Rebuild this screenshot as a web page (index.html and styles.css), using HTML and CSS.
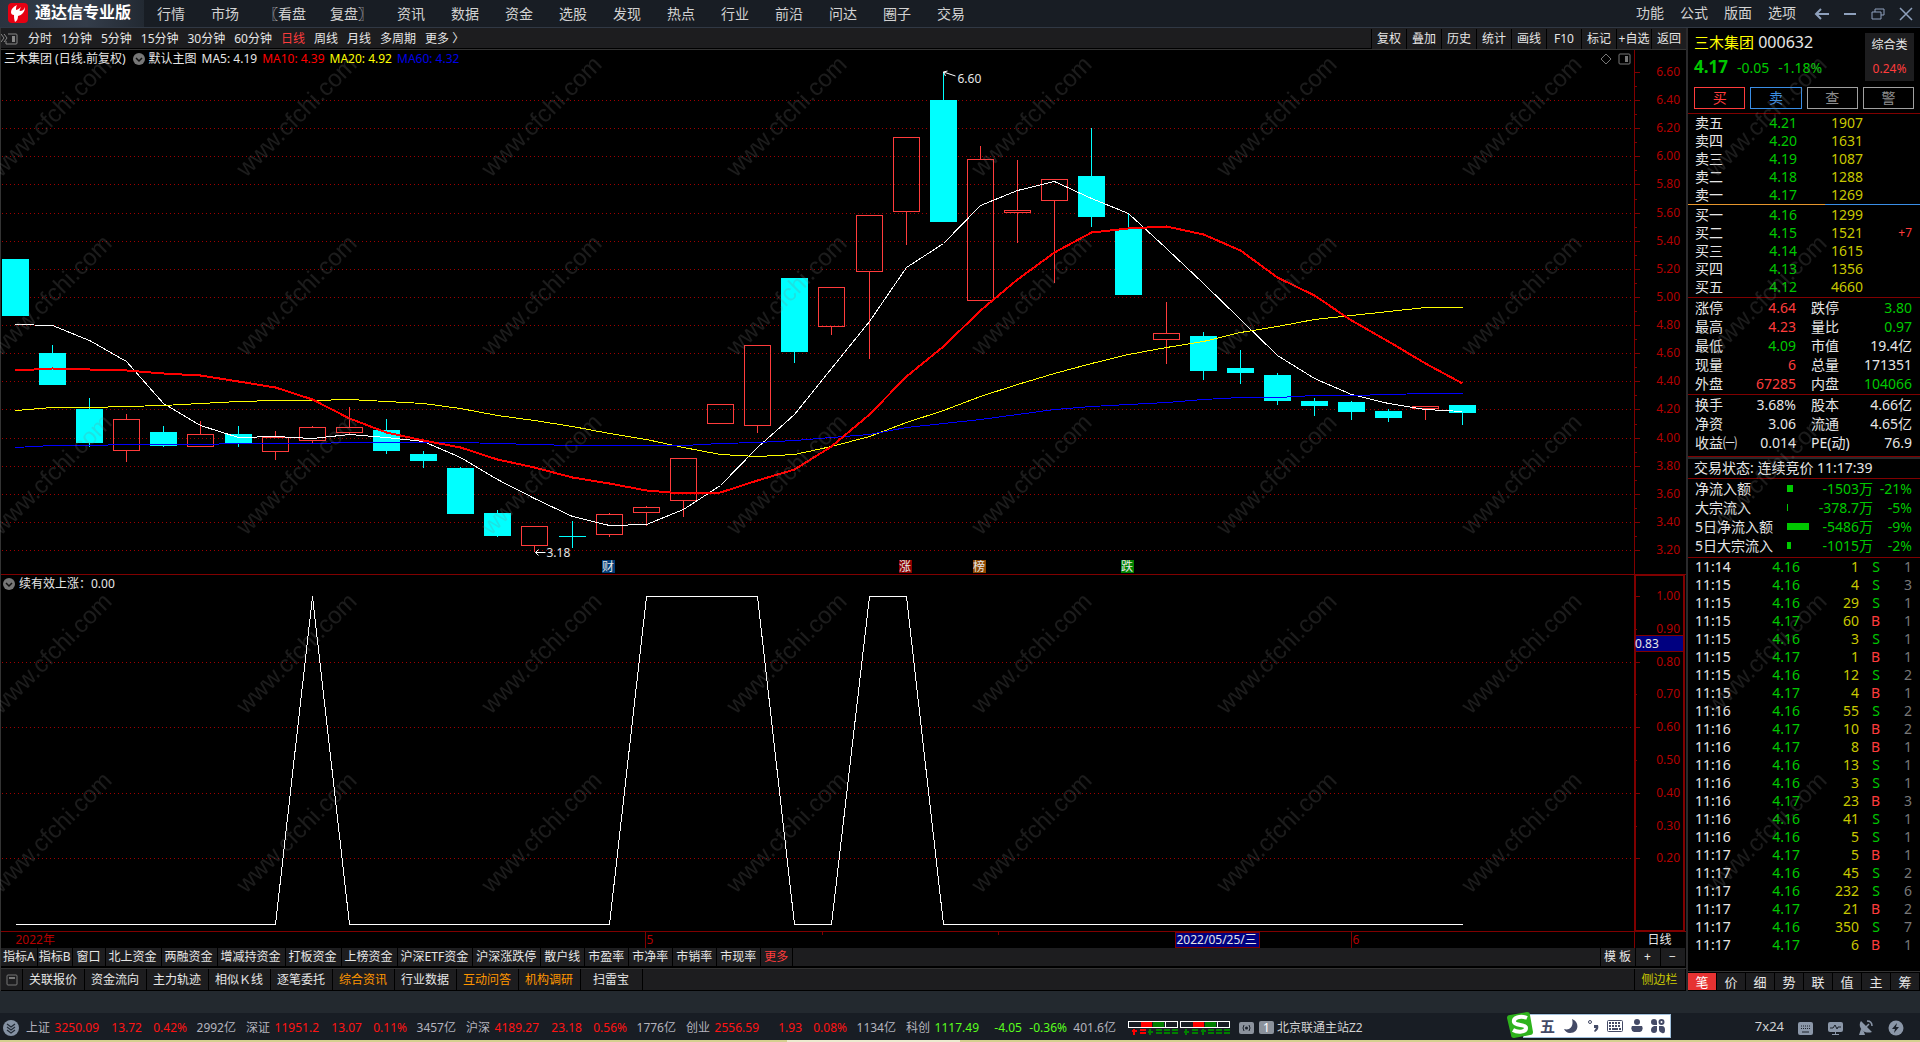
FILE: index.html
```html
<!DOCTYPE html>
<html lang="zh-CN">
<head>
    <meta charset="UTF-8">
    <meta name="viewport" content="width=device-width, initial-scale=1.0">
    <title>通达信专业版 - 三木集团 000632</title>
    <link rel="stylesheet" href="styles.css">
</head>
<body>
    <header class="topbar">
        <div class="brand">
            <svg width="20" height="20" viewBox="0 0 20 20">
                <rect width="20" height="20" rx="4" fill="#e60012"/>
                <path d="M9 2C5 4 3 6 3 9c0 2 1 3 3 3 0 2 0 4 1 7 2-1 3-3 3-6 4-1 7-4 7-9-1 3-3 4-5 4-1 0 0-2 1-4-2 2-4 3-5 3 0-2 0-3 1-5z" fill="#fff"/>
            </svg>
            <span>通达信专业版</span>
        </div>
        <nav class="menu">
            <a href="#">行情</a><a href="#">市场</a><a href="#" class="wide">〖看盘</a><a href="#" class="wide">复盘〗</a><a href="#">资讯</a><a href="#">数据</a><a href="#">资金</a><a href="#">选股</a><a href="#">发现</a><a href="#">热点</a><a href="#">行业</a><a href="#">前沿</a><a href="#">问达</a><a href="#">圈子</a><a href="#">交易</a>
        </nav>
        <nav class="menu-right">
            <a href="#">功能</a><a href="#">公式</a><a href="#">版面</a><a href="#">选项</a>
        </nav>
        <div class="win-btns">
            <button aria-label="后退"><svg width="16" height="16" viewBox="0 0 16 16"><path d="M15 8H2M7 3L2 8l5 5" stroke-width="2"/></svg></button>
            <button aria-label="最小化"><svg width="16" height="16" viewBox="0 0 16 16"><path d="M2 8h12" stroke-width="2"/></svg></button>
            <button aria-label="还原"><svg width="16" height="16" viewBox="0 0 16 16"><path d="M5 6V3h9v6h-3M2 6h9v7H2z"/></svg></button>
            <button aria-label="关闭"><svg width="16" height="16" viewBox="0 0 16 16"><path d="M2 2l12 12M14 2L2 14" stroke-width="1.5"/></svg></button>
        </div>
    </header>

    <div class="main">
        <section class="left">
            <div class="period-bar">
                <svg class="panel-icon" width="18" height="14" viewBox="0 0 18 14">
                    <path d="M0 2l3 4-3 4M3 2l3 4-3 4" fill="none" stroke="#888"/>
                    <path d="M7 2h8q1 0 1 1v8q0 1-1 1H5V9" fill="none" stroke="#888"/>
                    <path d="M11 4h3v6h-3z" fill="#888"/>
                </svg>
                <div class="periods">
                    <a href="#">分时</a><a href="#">1分钟</a><a href="#">5分钟</a><a href="#">15分钟</a><a href="#">30分钟</a><a href="#">60分钟</a><a href="#" class="on">日线</a><a href="#">周线</a><a href="#">月线</a><a href="#">多周期</a><a href="#">更多 〉</a>
                </div>
                <div class="tools">
                    <button>复权</button><button>叠加</button><button>历史</button><button>统计</button><button>画线</button><button>F10</button><button>标记</button><button>+自选</button><button>返回</button>
                </div>
            </div>

            <div class="pane pane-k">
                <svg id="kchart" class="plot"></svg>
                <div class="pane-head">
                    <span>三木集团 (日线.前复权)</span>
                    <svg class="drop" width="12" height="12" viewBox="0 0 12 12"><circle cx="6" cy="6" r="6" fill="#777"/><path d="M3 5l3 3 3-3" fill="none" stroke="#111" stroke-width="1.5"/></svg>
                    <span>默认主图</span>
                    <span>MA5: 4.19</span>
                    <span class="ma10">MA10: 4.39</span>
                    <span class="ma20">MA20: 4.92</span>
                    <span class="ma60">MA60: 4.32</span>
                    <svg class="corner" width="32" height="12" viewBox="0 0 32 12"><path d="M6 1l5 5-5 5-5-5z" fill="none" stroke="#777"/><rect x="19" y="1" width="11" height="10" rx="1" fill="none" stroke="#777"/><path d="M25 3h3v6h-3z" fill="#777"/></svg>
                </div>
            </div>
            <div class="pane pane-sub">
                <svg id="subchart" class="plot"></svg>
                <div class="pane-head sub">
                    <svg class="drop" width="12" height="12" viewBox="0 0 12 12"><circle cx="6" cy="6" r="6" fill="#777"/><path d="M3 5l3 3 3-3" fill="none" stroke="#111" stroke-width="1.5"/></svg>
                    <span>续有效上涨：0.00</span>
                </div>
            </div>
            <div class="dates">
                <svg id="dateaxis" class="plot"></svg>
                <span class="cycle">日线</span>
            </div>

            <div class="tabs">
                <button class="slim">指标A</button><button class="slim">指标B</button><button>窗口</button><button>北上资金</button><button>两融资金</button><button>增减持资金</button><button>打板资金</button><button>上榜资金</button><button>沪深ETF资金</button><button>沪深涨跌停</button><button>散户线</button><button>市盈率</button><button>市净率</button><button>市销率</button><button>市现率</button><button class="on">更多</button>
                <span class="fill"></span>
                <button class="tpl">模 板</button><button class="zoom">+</button><button class="zoom">−</button>
            </div>
            <div class="tabs links">
                <button class="box" aria-label="窗口"><svg width="12" height="12" viewBox="0 0 12 12"><rect x="1" y="1" width="10" height="10" rx="1" fill="none" stroke="#777"/><path d="M3 3h6v2H3z" fill="#777"/></svg></button><button>关联报价</button><button>资金流向</button><button>主力轨迹</button><button>相似Ｋ线</button><button>逐笔委托</button><button class="hot">综合资讯</button><button>行业数据</button><button class="hot">互动问答</button><button class="hot">机构调研</button><button>扫雷宝</button>
                <span class="fill"></span>
                <button class="sidebar-btn">侧边栏</button>
            </div>
        </section>

        <aside class="side">
            <div class="quote">
                <div class="quote-info">
                    <div class="name"><b>三木集团</b> 000632</div>
                    <div class="price"><b>4.17</b><span>-0.05</span><span>-1.18%</span></div>
                </div>
                <div class="sector"><span>综合类</span><span class="r">0.24%</span></div>
                <div class="actions">
                    <button class="buy">买</button><button class="sell">卖</button><button>查</button><button>警</button>
                </div>
            </div>
            <table class="book">
                <tr><th>卖五</th><td>4.21</td><td>1907</td><td></td></tr>
                <tr><th>卖四</th><td>4.20</td><td>1631</td><td></td></tr>
                <tr><th>卖三</th><td>4.19</td><td>1087</td><td></td></tr>
                <tr><th>卖二</th><td>4.18</td><td>1288</td><td></td></tr>
                <tr><th>卖一</th><td>4.17</td><td>1269</td><td></td></tr>
            </table>
            <div class="ratio"></div>
            <table class="book">
                <tr><th>买一</th><td>4.16</td><td>1299</td><td></td></tr>
                <tr><th>买二</th><td>4.15</td><td>1521</td><td>+7</td></tr>
                <tr><th>买三</th><td>4.14</td><td>1615</td><td></td></tr>
                <tr><th>买四</th><td>4.13</td><td>1356</td><td></td></tr>
                <tr><th>买五</th><td>4.12</td><td>4660</td><td></td></tr>
            </table>
            <table class="stats">
                <tr><th>涨停</th><td class="r">4.64</td><th>跌停</th><td class="g">3.80</td></tr>
                <tr><th>最高</th><td class="r">4.23</td><th>量比</th><td class="g">0.97</td></tr>
                <tr><th>最低</th><td class="g">4.09</td><th>市值</th><td>19.4亿</td></tr>
                <tr><th>现量</th><td class="r">6</td><th>总量</th><td>171351</td></tr>
                <tr><th>外盘</th><td class="r">67285</td><th>内盘</th><td class="g">104066</td></tr>
            </table>
            <table class="stats">
                <tr><th>换手</th><td>3.68%</td><th>股本</th><td>4.66亿</td></tr>
                <tr><th>净资</th><td>3.06</td><th>流通</th><td>4.65亿</td></tr>
                <tr><th>收益㈠</th><td>0.014</td><th>PE(动)</th><td>76.9</td></tr>
            </table>
            <div class="state">交易状态: 连续竞价 11:17:39</div>
            <table class="flow">
                <tr><th>净流入额</th><td><i style="width:6px"></i></td><td>-1503万</td><td>-21%</td></tr>
                <tr><th>大宗流入</th><td><i style="width:1px"></i></td><td>-378.7万</td><td>-5%</td></tr>
                <tr><th>5日净流入额</th><td><i style="width:22px"></i></td><td>-5486万</td><td>-9%</td></tr>
                <tr><th>5日大宗流入</th><td><i style="width:4px"></i></td><td>-1015万</td><td>-2%</td></tr>
            </table>
            <div class="ticks">
                <table id="ticks"></table>
            </div>
            <div class="side-tabs">
                <button class="on">笔</button><button>价</button><button>细</button><button>势</button><button>联</button><button>值</button><button>主</button><button>筹</button>
            </div>
        </aside>

        <svg class="watermark">
            <defs>
                <pattern id="wm" x="-12" y="6" width="245" height="179" patternUnits="userSpaceOnUse">
                    <text transform="translate(13 122) rotate(-45)">www.cfchi.com</text>
                </pattern>
            </defs>
            <rect width="100%" height="100%" fill="url(#wm)"/>
        </svg>
    </div>

    <div class="band"></div>
    <footer class="status">
        <svg class="fold" width="16" height="16" viewBox="0 0 16 16"><circle cx="8" cy="8" r="8" fill="#8592a3"/><path d="M4 4l4 3 4-3M4 7l4 3 4-3M4 10l4 3 4-3" fill="none" stroke="#222b36" stroke-width="1.2"/></svg>
        <div class="idx"><span>上证</span><b>3250.09</b><b>13.72</b><b>0.42%</b><span>2992亿</span></div>
        <div class="idx"><span>深证</span><b>11951.2</b><b>13.07</b><b>0.11%</b><span>3457亿</span></div>
        <div class="idx"><span>沪深</span><b>4189.27</b><b>23.18</b><b>0.56%</b><span>1776亿</span></div>
        <div class="idx"><span>创业</span><b>2556.59</b><b>1.93</b><b>0.08%</b><span>1134亿</span></div>
        <div class="idx down"><span>科创</span><b>1117.49</b><b>-4.05</b><b>-0.36%</b><span>401.6亿</span></div>
        <svg class="meter" width="104" height="16" viewBox="0 0 104 16" shape-rendering="crispEdges">
            <path d="M13 1h11v6H13zM65 1h11v6H65z" fill="#f00"/>
            <path d="M25 1h11v6H25zM77 1h11v6H77z" fill="#008000"/>
            <path d="M.5 1.5h49v6H.5zM37.5 1v6M52.5 1.5h49v6h-49zM89.5 1v6" fill="none" stroke="#fff"/>
            <path d="M6 9v6M4 11h5M12 10h6M12 13h6" fill="none" stroke="#f00" stroke-width="2"/>
            <path d="M22 9v6M20 12h5M28 10h6M28 13h6M36 10h6M36 13h6M44 10h6M44 13h6M58 9v6M56 12h5M64 10h6M64 13h6M75 9v6M73 11h5M80 10h6M80 13h6M88 10h6M88 13h6M96 10h6M96 13h6" fill="none" stroke="#008000" stroke-width="2"/>
        </svg>
        <svg width="15" height="12" viewBox="0 0 15 12"><rect width="15" height="12" rx="2" fill="#8b929c"/><circle cx="7.500" cy="6" r="1.500" fill="#1a2029"/><path d="M5 3Q3 6 5 9M10 3q2 3 0 6" fill="none" stroke="#1a2029"/></svg>
        <span class="num">1</span>
        <span class="station">北京联通主站Z2</span>
        <div class="status-right">
            <span>7x24</span>
            <svg width="16" height="16" viewBox="0 0 16 16"><rect y="2" width="15" height="13" rx="2" fill="#8b97a8"/><path d="M3 6h10M3 8.500h10" stroke="#1a2029" stroke-dasharray="1 1"/><path d="M4 12h7" stroke="#1a2029"/></svg>
            <svg width="16" height="16" viewBox="0 0 16 16"><rect y="2" width="15" height="10" rx="2" fill="#8b97a8"/><path d="M7.500 12v2M4 14.500h7" stroke="#8b97a8"/><path d="M2 8h3l2-3 2 4 1-2h3" fill="none" stroke="#1a2029"/></svg>
            <svg width="16" height="16" viewBox="0 0 16 16"><path d="M3 1c-4 5 2 14 11 11zM3 9l3 3 1 3H1z" fill="#8b97a8"/><path d="M8 7l3-3M9 1c3 0 5 2 5 5" fill="none" stroke="#8b97a8" stroke-width="1.500"/></svg>
            <svg width="16" height="16" viewBox="0 0 16 16"><circle cx="8" cy="8" r="7.500" fill="#8b97a8"/><path d="M9 3L4 9h3l-1 4 5-6H8z" fill="#1a2029"/></svg>
        </div>
        <div class="ime">
            <svg class="ime-logo" width="28" height="28" viewBox="0 0 28 28"><path d="M4 4l17-3q3 0 3 3l3 17q0 3-3 3L8 27q-3 0-3-3L1 7q0-3 3-3z" fill="#2eb31c"/><path d="M21 7C14 4 7 7 8 11s12 2 12 6-8 5-13 2" fill="none" stroke="#fff" stroke-width="4"/></svg>
            <span>五</span>
            <svg width="16" height="16" viewBox="0 0 16 16"><path d="M9 1c8 3 7 14-2 14-3 0-5-2-6-4 6 2 10-3 8-10z" fill="#444a66"/></svg>
            <svg width="12" height="16" viewBox="0 0 12 16"><circle cx="3" cy="4" r="1.500" fill="none" stroke="#444a66"/><path d="M7 7h4c1 3 0 5-3 7l-1-1 2-3H7z" fill="#444a66"/></svg>
            <svg width="16" height="16" viewBox="0 0 16 16"><rect x=".5" y="2.500" width="15" height="11" rx="1" fill="none" stroke="#444a66"/><path d="M2 5h12M2 8h12" stroke="#444a66" stroke-width="2" stroke-dasharray="2 1"/><path d="M2 11h2M5 11h6M12 11h2" stroke="#444a66" stroke-width="2"/></svg>
            <svg width="12" height="16" viewBox="0 0 12 16"><circle cx="6" cy="4" r="3" fill="#444a66"/><path d="M1 8h10q2 4-2 6H3q-4-2-2-6z" fill="#444a66"/></svg>
            <svg width="14" height="16" viewBox="0 0 14 16"><path d="M3 1q3 0 3 3v3H3Q0 7 0 4t3-3zM6 8v4q0 3-3 3t-3-3 3-4zM8 8h3q3 0 3 4t-3 3-3-3z" fill="#444a66"/><circle cx="10.500" cy="4" r="2" fill="none" stroke="#444a66" stroke-width="2"/></svg>
        </div>
    </footer>
    <div class="strip"></div>

    <script src="script.js"></script>
</body>
</html>
```
FILE: styles.css
```css
* {
    box-sizing: border-box;
}
body {
    margin: 0;
    min-height: 100vh;
    display: flex;
    flex-direction: column;
    background-color: #000;
    color: #e6e6e6;
    font-family: "Noto Sans", "Noto Sans CJK SC", sans-serif;
    font-size: 12px;
    line-height: 18px;
    white-space: nowrap;
}
a {
    color: inherit;
    text-decoration: none;
}
button {
    font: inherit;
    color: inherit;
    background-color: #1d1d1f;
    border: none;
    padding: 0;
    cursor: pointer;
}
svg {
    display: block;
    flex: none;
}
table {
    width: 100%;
    table-layout: fixed;
    border-collapse: collapse;
}
th, td {
    padding: 0;
    font-weight: normal;
    text-align: left;
}
.r {
    color: #ff3c3c;
}
.g {
    color: #00c800;
}

/* title bar */
.topbar {
    display: flex;
    height: 28px;
    background-color: #181d24;
    border-bottom: 1px solid #303844;
    font-size: 14px;
    line-height: 27px;
    color: #d2d2d2;
}
.brand {
    display: flex;
    align-items: center;
    gap: 7px;
    width: 144px;
    padding-left: 8px;
    padding-bottom: 2px;
    background: linear-gradient(90deg, #2b333f, #343d4a 60%, #222932);
    font-size: 16px;
    font-weight: bold;
    color: #fff;
}
.menu {
    display: flex;
    flex: 1;
}
.menu a {
    padding: 0 13px;
}
.menu a.wide {
    padding: 0 12px;
}
.menu-right {
    display: flex;
    gap: 16px;
    line-height: 26px;
}
.win-btns {
    display: flex;
    align-items: center;
    gap: 12px;
    padding: 0 6px 0 18px;
}
.win-btns button {
    background: none;
}
.win-btns svg {
    fill: none;
    stroke: #8ea0bc;
}

.main {
    position: relative;
    flex: 1;
    display: grid;
    grid-template-columns: 1fr 234px;
}
.watermark {
    position: absolute;
    left: 0;
    top: 22px;
    width: 100%;
    height: calc(100% - 66px);
    pointer-events: none;
}
.watermark text {
    font-family: "Liberation Sans", sans-serif;
    font-size: 24px;
    fill: rgba(128, 128, 128, 0.22);
}

/* chart side */
.left {
    display: flex;
    flex-direction: column;
    min-width: 0;
    border-left: 1px solid #333;
}
.period-bar {
    display: flex;
    align-items: center;
    height: 22px;
    background-color: #1d1d1f;
    border-bottom: 1px solid #333;
    box-shadow: inset 0 -1px #000;
}
.panel-icon {
    width: 27px;
    padding-right: 9px;
}
.periods {
    display: flex;
    flex: 1;
    gap: 9px;
}
.periods .on, .tabs .on {
    color: #ff3c3c;
}
.tools {
    display: flex;
}
.tools button {
    width: 35px;
    height: 20px;
    border-left: 1px solid #000;
}
.pane {
    position: relative;
    border-bottom: 1px solid #800000;
}
.pane-k {
    flex: 525 1 0;
}
.pane-sub {
    flex: 357 1 0;
}
.plot {
    position: absolute;
    left: 0;
    top: 0;
    width: 100%;
    height: 100%;
}
.plot text {
    font-size: 12px;
    fill: #b40000;
}
.plot .white {
    fill: #e6e6e6;
}
.plot .end {
    text-anchor: end;
}
.pane-head {
    position: relative;
    display: flex;
    align-items: center;
    gap: 5px;
    padding-left: 3px;
    width: calc(100% - 52px);
}
.pane-head .drop {
    margin-left: 2px;
    margin-right: -1px;
}
.pane-head.sub .drop {
    margin-left: -1px;
}
.corner {
    margin-left: auto;
    margin-right: 2px;
}
.ma10 {
    color: #f00;
}
.ma20 {
    color: #ff0;
}
.ma60 {
    color: #0000e6;
}
.dates {
    position: relative;
    display: flex;
    justify-content: flex-end;
    height: 16px;
    line-height: 16px;
}
.cycle {
    width: 52px;
    padding-right: 2px;
    text-align: center;
    border-left: 1px solid #800000;
}

.tabs {
    display: flex;
    height: 21px;
    padding-left: 1px;
    border-bottom: 1px solid #333;
    background: #1d1d1f;
    box-shadow: inset 0 -2px #000;
    padding-bottom: 2px;
}
.tabs button {
    padding: 0 4px 0 3px;
    border-right: 1px solid #000;
}
.tabs .slim {
    padding: 0 2px 0 1px;
}
.fill {
    flex: 1;
}
.tabs .tpl {
    width: 36px;
    border-left: 1px solid #000;
}
.tabs .zoom {
    width: 25px;
}
.tabs.links {
    height: 22px;
    border-bottom-color: #000;
    padding-bottom: 0;
    box-shadow: none;
}
.links button {
    width: 62px;
}
.tabs .box {
    width: 21px;
    padding: 0 4px;
}
.tabs .hot {
    color: #ff9600;
}
.tabs .sidebar-btn {
    width: 52px;
    color: #c8c800;
    border-left: 1px solid #000;
}

/* quote side */
.side {
    display: flex;
    flex-direction: column;
    border-left: 2px solid #2a2a2c;
    font-size: 14px;
}
.quote {
    display: grid;
    grid-template-columns: 1fr 49px;
    padding: 5px 6px 5px 6px;
    height: 85px;
}
.name {
    font-size: 16px;
    line-height: 18px;
}
.name b {
    font-size: 15px;
    font-weight: normal;
    color: #ff0;
}
.price {
    display: flex;
    align-items: baseline;
    gap: 9px;
    line-height: 31px;
    color: #00c800;
}
.price b {
    font-size: 17px;
}
.sector {
    display: flex;
    flex-direction: column;
    height: 48px;
    background-color: #1d1d1f;
    font-size: 12px;
    line-height: 24px;
    text-align: center;
}
.actions {
    grid-column: 1 / 3;
    display: flex;
    gap: 5px;
    padding-top: 4px;
}
.actions button {
    flex: 1;
    height: 22px;
    line-height: 18px;
    background: none;
    border: 1px solid #a0a0a0;
    color: #8c8c8c;
}
.actions .buy {
    color: #ff3c3c;
    border-color: #ff3c3c;
}
.actions .sell {
    color: #3a8ee6;
    border-color: #3a8ee6;
}
.side > table, .side .ticks {
    border-top: 1px solid #800000;
}
.side th, .side table td {
    height: 18px;
    line-height: 18px;
}
.side th {
    padding-left: 7px;
}
.side td {
    text-align: right;
}
.book th {
    width: 50px;
}
.book td:nth-child(2) {
    width: 59px;
    color: #00c800;
}
.book td:nth-child(3) {
    width: 66px;
    color: #c8c800;
}
.book td:nth-child(4) {
    padding-right: 8px;
    font-size: 12px;
    color: #ff3c3c;
}
.ratio {
    height: 1px;
    background: linear-gradient(90deg, #e6962d 59%, #3a8ee6 59%);
}
.side .ratio + .book {
    border-top: 1px solid #000;
    border-bottom: 1px solid #000;
}
.side .stats th, .side .stats td, .side .flow th, .side .flow td {
    height: 19px;
    line-height: 19px;
}
.stats th {
    width: 56px;
}
.stats td {
    width: 52px;
}
.stats td + th {
    padding-left: 15px;
}
.stats td:last-child {
    width: 68px;
    padding-right: 8px;
}
.stats + .stats {
    margin-top: 1px;
    border-bottom: 4px solid #000;
}
.state {
    height: 22px;
    padding-left: 6px;
    line-height: 21px;
    border-top: 1px solid #800000;
    box-shadow: inset 0 2px #2a2a2c;
}
.flow th {
    width: 99px;
}
.flow td:nth-child(2) {
    width: 24px;
}
.flow td:nth-child(3) {
    width: 62px;
}
.flow td {
    color: #00c800;
}
.flow td:last-child {
    padding-right: 8px;
}
.flow i {
    display: block;
    height: 7px;
    background-color: #00c800;
}
.flow {
    margin-bottom: 2px;
}
.ticks {
    flex: 1;
}
.ticks td:nth-child(1) {
    width: 55px;
    padding-left: 7px;
    text-align: left;
}
.ticks td:nth-child(2) {
    width: 57px;
    color: #00c800;
}
.ticks td:nth-child(3) {
    width: 59px;
    color: #c8c800;
}
.ticks td:nth-child(4) {
    width: 21px;
}
.ticks td:nth-child(5) {
    padding-right: 8px;
    color: #787878;
}
.side-tabs {
    display: flex;
    height: 20px;
    gap: 1px;
    border-top: 1px solid #333;
    padding: 1px 1px 1px 0;
}
.side-tabs button {
    flex: 1;
    line-height: 16px;
    font-size: 13px;
}
.side-tabs .on {
    background-color: #e63232;
    color: #fff;
}

/* status bar */
.band {
    height: 22px;
    background-color: #23292f;
}
.status {
    position: relative;
    display: flex;
    align-items: center;
    height: 27px;
    padding-top: 2px;
    background-color: #181d24;
    color: #b4b4be;
}
.fold {
    margin: 0 7px 0 3px;
}
.idx {
    display: grid;
    grid-template-columns: 25px 48px 43px 45px 49px;
    width: 220px;
    text-align: right;
}
.idx span:first-child {
    text-align: left;
}
.idx b {
    font-weight: normal;
    color: #ff1414;
}
.idx.down b {
    color: #5aff1e;
}
.meter {
    margin: 0 7px 0 2px;
}
.num {
    width: 15px;
    height: 13px;
    margin: 0 3px 0 5px;
    border-radius: 2px;
    background-color: #8b929c;
    color: #fff;
    line-height: 13px;
    text-align: center;
}
.station {
    color: #d2d2d2;
}
.status-right {
    display: flex;
    align-items: center;
    gap: 14px;
    margin-left: auto;
    padding-right: 16px;
}
.status-right span {
    font-size: 13px;
    color: #d2d2d2;
    padding-bottom: 4px;
}
.ime {
    position: absolute;
    right: 249px;
    top: 1px;
    display: flex;
    align-items: center;
    gap: 8px;
    height: 24px;
    padding-right: 5px;
    background-color: #fff;
    border: 1px solid #a0c0dc;
    color: #444a66;
    font-size: 15px;
    font-weight: bold;
}
.ime-logo {
    margin: -3px -2px 0 -18px;
}
.strip {
    height: 2px;
    background: linear-gradient(90deg, #d4d08f 41%, #ecebd0 41%, #ecebd0 50%, #d4d08f 50%);
}
```
FILE: script.js
```javascript
const SVG_NS = 'http://www.w3.org/2000/svg';
const AXIS_W = 52;
const BASE_W = 1633, K_H = 524, SUB_H = 356;

// [direction, high, top of body, bottom of body, low], in chart units from the top of the pane
const candles = [
    ['d', 209, 209, 266, 266], ['d', 295, 303, 335, 335], ['d', 348, 359, 393, 397], ['u', 364, 369, 401, 412],
    ['d', 376, 382, 396, 397], ['u', 371, 384, 397, 397], ['d', 376, 384, 393, 397], ['u', 381, 387, 402, 410],
    ['u', 376, 377, 391, 393], ['u', 357, 377, 383, 385], ['d', 369, 380, 401, 404], ['d', 401, 404, 411, 418],
    ['d', 417, 418, 464, 464], ['d', 460, 463, 486, 487], ['u', 476, 476, 496, 502], ['d', 471, 486, 487, 498],
    ['u', 463, 464, 485, 487], ['u', 456, 457, 463, 476], ['u', 408, 408, 451, 467], ['u', 354, 354, 374, 374],
    ['u', 295, 295, 376, 383], ['d', 228, 228, 302, 313], ['u', 237, 237, 277, 285], ['u', 165, 165, 222, 309],
    ['u', 87, 87, 162, 195], ['d', 22, 50, 172, 172], ['u', 96, 109, 251, 251], ['u', 110, 160, 163, 193],
    ['u', 129, 129, 151, 233], ['d', 78, 126, 167, 177], ['d', 163, 179, 245, 245], ['u', 252, 283, 290, 314],
    ['d', 282, 286, 321, 330], ['d', 300, 318, 323, 334], ['d', 323, 325, 351, 355], ['d', 348, 351, 356, 366],
    ['d', 351, 352, 362, 370], ['d', 359, 361, 368, 372], ['u', 356, 356, 359, 370], ['d', 355, 355, 363, 375]
];
const averages = [
    { color: '#ffffff', width: 1, y: [274, 275, 290, 311, 353, 375, 387, 386, 388, 384, 387, 391, 407, 429, 448, 466, 475, 474, 459, 435, 397, 364, 318, 271, 217, 193, 155, 140, 131, 148, 163, 198, 233, 269, 305, 328, 344, 353, 359, 361] },
    { color: '#ffff00', width: 1, y: [360, 357, 357, 356, 355, 353, 351, 350, 350, 349, 351, 353, 358, 365, 370, 376, 383, 389, 397, 404, 406, 404, 396, 386, 372, 360, 346, 334, 323, 313, 304, 297, 291, 282, 276, 269, 265, 261, 257, 257] },
    { color: '#0000ff', width: 1, y: [397, 395, 395, 394, 394, 394, 393, 393, 393, 392, 392, 392, 392, 393, 394, 395, 395, 395, 395, 393, 392, 390, 387, 384, 377, 373, 369, 364, 359, 356, 354, 352, 349, 347, 347, 345, 345, 344, 343, 343] },
    { color: '#ff0000', width: 2, y: [320, 318, 319, 320, 323, 325, 331, 337, 349, 368, 382, 390, 397, 409, 417, 427, 433, 440, 443, 442, 430, 419, 396, 364, 326, 296, 260, 229, 202, 182, 178, 176, 184, 200, 227, 245, 270, 291, 313, 333] }
];
const signal = [0, 0, 0, 0, 0, 0, 0, 0, 1, 0, 0, 0, 0, 0, 0, 0, 0, 1, 1, 1, 1, 0, 0, 1, 1, 0, 0, 0, 0, 0, 0, 0, 0, 0, 0, 0, 0, 0, 0, 0];
const events = [[16, '财', '#003c78'], [24, '涨', '#8c0000'], [26, '榜', '#8c4600'], [30, '跌', '#008200']];

const ticks = [
    ['11:14', '4.16', 1, 'S', 1], ['11:15', '4.16', 4, 'S', 3], ['11:15', '4.16', 29, 'S', 1], ['11:15', '4.17', 60, 'B', 1],
    ['11:15', '4.16', 3, 'S', 1], ['11:15', '4.17', 1, 'B', 1], ['11:15', '4.16', 12, 'S', 2], ['11:15', '4.17', 4, 'B', 1],
    ['11:16', '4.16', 55, 'S', 2], ['11:16', '4.17', 10, 'B', 2], ['11:16', '4.17', 8, 'B', 1], ['11:16', '4.16', 13, 'S', 1],
    ['11:16', '4.16', 3, 'S', 1], ['11:16', '4.17', 23, 'B', 3], ['11:16', '4.16', 41, 'S', 1], ['11:16', '4.16', 5, 'S', 1],
    ['11:17', '4.17', 5, 'B', 1], ['11:17', '4.16', 45, 'S', 2], ['11:17', '4.16', 232, 'S', 6], ['11:17', '4.17', 21, 'B', 2],
    ['11:17', '4.16', 350, 'S', 7], ['11:17', '4.17', 6, 'B', 1]
];

function add(svg, tag, attrs, text) {
    const el = document.createElementNS(SVG_NS, tag);
    for (const k in attrs) el.setAttribute(k, attrs[k]);
    if (text) el.textContent = text;
    svg.appendChild(el);
}

function line(svg, x1, y1, x2, y2, color, extra) {
    add(svg, 'path', { d: `M${x1} ${y1}L${x2} ${y2}`, stroke: color, fill: 'none', 'shape-rendering': 'crispEdges', ...extra });
}

function rect(svg, x, y, width, height, fill, stroke) {
    add(svg, 'rect', { x, y, width, height, fill, stroke: stroke || 'none', 'shape-rendering': 'crispEdges' });
}

function polyline(svg, points, color, width) {
    add(svg, 'polyline', { points: points.map(p => p.join(',')).join(' '), fill: 'none', stroke: color, 'stroke-width': width, 'shape-rendering': 'crispEdges' });
}

function centerX(i, plotW) {
    return Math.floor((14.3 + 37.12 * i) * plotW / BASE_W) + 0.5;
}

function drawK() {
    const svg = document.getElementById('kchart');
    svg.innerHTML = '';
    const plotW = svg.clientWidth - AXIS_W;
    const h = svg.clientHeight;
    const sy = v => Math.round(v * h / K_H);

    line(svg, plotW + 0.5, 0, plotW + 0.5, h, '#800000');
    for (let k = 0; k <= 34; k++) {
        const y = sy(22 + k * 14.06) + 0.5;
        if (k % 2) {
            line(svg, plotW, y, plotW + 3, y, '#800000');
            continue;
        }
        line(svg, plotW, y, plotW + 6, y, '#800000');
        if (k > 0) line(svg, 1, y, plotW, y, '#a00000', { 'stroke-dasharray': '1 3' });
        add(svg, 'text', { x: plotW + 46, y: y + 3.5, class: 'end' }, (6.6 - k * 0.1).toFixed(2));
    }

    const bw = Math.round(27 * plotW / BASE_W);
    candles.forEach(([dir, high, top, bottom, low], i) => {
        const cx = centerX(i, plotW);
        const x = Math.round(cx - bw / 2);
        const color = dir === 'u' ? '#ff3c3c' : '#00ffff';
        line(svg, cx, sy(high), cx, sy(top), color);
        line(svg, cx, sy(bottom), cx, sy(low), color);
        if (dir === 'u') {
            rect(svg, x + 0.5, sy(top) + 0.5, bw - 1, sy(bottom) - sy(top) - 1, 'none', color);
        } else {
            rect(svg, x, sy(top), bw, sy(bottom) - sy(top), color);
        }
    });

    averages.forEach(ma => {
        polyline(svg, ma.y.map((v, i) => [centerX(i, plotW), sy(v) + 0.5]), ma.color, ma.width);
    });

    const hx = centerX(25, plotW), lx = centerX(14, plotW);
    add(svg, 'path', { d: `M${hx} ${sy(22)}l12 4M${hx} ${sy(22)}l4 -1M${hx} ${sy(22)}l2 4`, stroke: '#fff', fill: 'none' });
    add(svg, 'text', { x: hx + 14, y: sy(29) + 4, class: 'white' }, '6.60');
    add(svg, 'path', { d: `M${lx + 1} ${sy(502) + 0.5}h10M${lx + 1} ${sy(502) + 0.5}l3 -3M${lx + 1} ${sy(502) + 0.5}l3 3`, stroke: '#fff', fill: 'none' });
    add(svg, 'text', { x: lx + 12, y: sy(503) + 4, class: 'white' }, '3.18');

    events.forEach(([i, label, color]) => {
        const x = centerX(i, plotW) - 7.5;
        rect(svg, x, sy(510), 13, 13, color);
        add(svg, 'text', { x, y: sy(510) + 11, class: 'white' }, label);
    });
}

function drawSub() {
    const svg = document.getElementById('subchart');
    svg.innerHTML = '';
    const plotW = svg.clientWidth - AXIS_W;
    const h = svg.clientHeight;
    const sy = v => Math.round((21 + (1 - v) * 328) * h / SUB_H) + 0.5;

    line(svg, plotW + 0.5, 0, plotW + 0.5, h, '#800000');
    for (let k = 0; k <= 8; k++) {
        const y = sy(1 - k * 0.1);
        line(svg, plotW, y, plotW + (k % 2 ? 3 : 6), y, '#800000');
        if (k > 0 && k % 2 === 0) line(svg, 1, y, plotW, y, '#a00000', { 'stroke-dasharray': '1 3' });
        add(svg, 'text', { x: plotW + 46, y: y + 3.5, class: 'end' }, (1 - k * 0.1).toFixed(2));
    }
    add(svg, 'rect', { x: plotW + 1, y: 0, width: 49, height: h, fill: 'none', stroke: '#800000', 'stroke-width': 2 });
    rect(svg, plotW + 1.5, sy(0.88), 48, 16, '#000080', '#800000');
    add(svg, 'text', { x: plotW + 1, y: sy(0.88) + 12, class: 'white' }, '0.83');
    polyline(svg, signal.map((v, i) => [centerX(i, plotW), sy(v)]), '#ffffff', 1);
}

function drawDates() {
    const svg = document.getElementById('dateaxis');
    svg.innerHTML = '';
    const plotW = svg.clientWidth - AXIS_W;
    const x5 = centerX(17, plotW) - 1, x6 = centerX(36, plotW);
    add(svg, 'text', { x: centerX(0, plotW), y: 12 }, '2022年');
    line(svg, x5, 0, x5, 16, '#800000');
    add(svg, 'text', { x: x5 + 1, y: 12 }, '5');
    line(svg, x5 + 177, 0, x5 + 177, 3, '#800000');
    line(svg, x5 + 353, 0, x5 + 353, 3, '#800000');
    const cur = centerX(31, plotW) + 9;
    rect(svg, cur, 0, 84, 15, '#000080', '#800000');
    add(svg, 'text', { x: cur + 1, y: 12, class: 'white' }, '2022/05/25/三');
    line(svg, x6, 0, x6, 16, '#800000');
    add(svg, 'text', { x: x6 + 1, y: 12 }, '6');
}

function drawAll() {
    drawK();
    drawSub();
    drawDates();
}

document.getElementById('ticks').innerHTML = ticks.map(t => `
    <tr><td>${t[0]}</td><td>${t[1]}</td><td>${t[2]}</td><td class="${t[3] === 'B' ? 'r' : 'g'}">${t[3]}</td><td>${t[4]}</td></tr>
`).join('');

drawAll();
window.addEventListener('resize', drawAll);
```
